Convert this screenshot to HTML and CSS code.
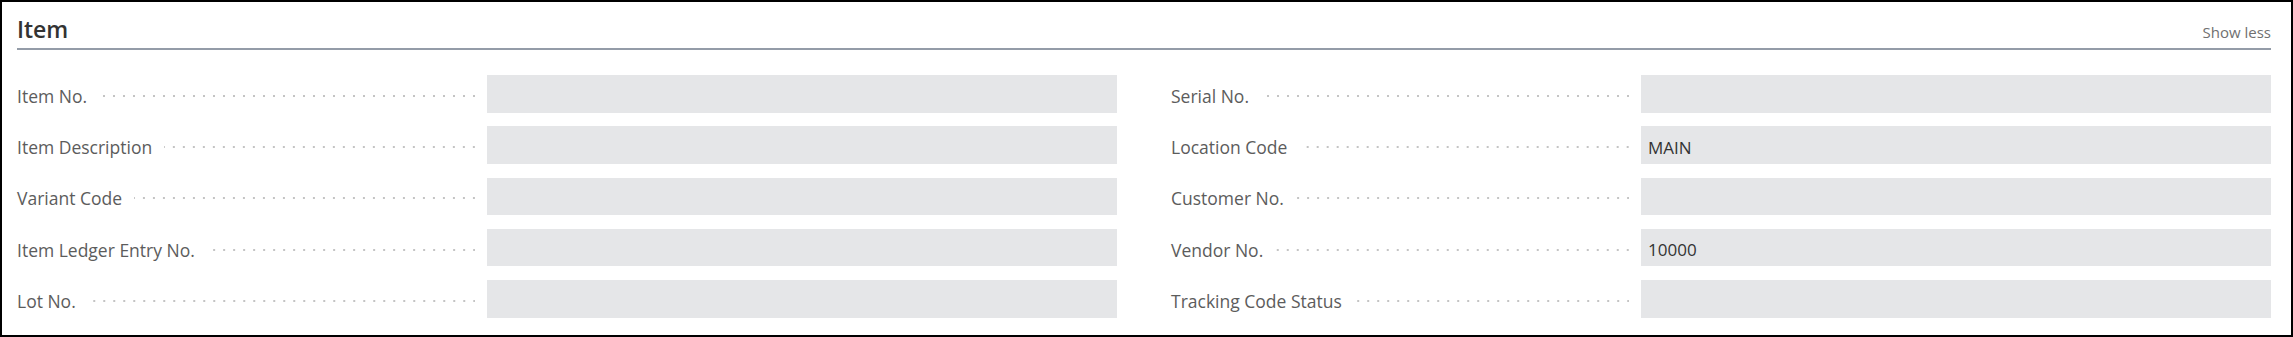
FILE: index.html
```html
<!DOCTYPE html>
<html lang="en">
<head>
<meta charset="UTF-8">
<title>Item</title>
<link rel="stylesheet" href="styles.css">
</head>
<body>

<!-- Item FastTab -->
<div class="card">
    <div class="card-header">
        <div class="card-title">Item</div>
        <a class="show-less" href="#">Show less</a>
    </div>

    <div class="columns">
        <div class="column">
            <div class="field">
                <div class="label"><span>Item No.</span><span class="leader"></span></div>
                <div class="value"></div>
            </div>
            <div class="field">
                <div class="label"><span>Item Description</span><span class="leader"></span></div>
                <div class="value"></div>
            </div>
            <div class="field">
                <div class="label"><span>Variant Code</span><span class="leader"></span></div>
                <div class="value"></div>
            </div>
            <div class="field">
                <div class="label"><span>Item Ledger Entry No.</span><span class="leader"></span></div>
                <div class="value"></div>
            </div>
            <div class="field">
                <div class="label"><span>Lot No.</span><span class="leader"></span></div>
                <div class="value"></div>
            </div>
        </div>

        <div class="column">
            <div class="field">
                <div class="label"><span>Serial No.</span><span class="leader"></span></div>
                <div class="value"></div>
            </div>
            <div class="field">
                <div class="label"><span>Location Code</span><span class="leader"></span></div>
                <div class="value">MAIN</div>
            </div>
            <div class="field">
                <div class="label"><span>Customer No.</span><span class="leader"></span></div>
                <div class="value"></div>
            </div>
            <div class="field">
                <div class="label"><span>Vendor No.</span><span class="leader"></span></div>
                <div class="value">10000</div>
            </div>
            <div class="field">
                <div class="label"><span>Tracking Code Status</span><span class="leader"></span></div>
                <div class="value"></div>
            </div>
        </div>
    </div>
</div>

</body>
</html>
```

FILE: styles.css
```css
* {
    box-sizing: border-box;
}

body, html {
    margin: 0;
    background-color: white;
    font-family: "Segoe UI", "Open Sans", sans-serif;
}

.card {
    height: 337px;
    border: 2px solid #000;
    padding: 0 20px 0 15px;
    background-color: white;
}

/* 헤더 */
.card-header {
    display: flex;
    justify-content: space-between;
    align-items: baseline;
    padding: 12px 0 4px;
    border-bottom: 2px solid #949ca8;
}

.card-title {
    font-size: 23px;
    line-height: 30px;
    font-weight: 600;
    color: #333;
}

.show-less {
    font-size: 15px;
    color: #707070;
    text-decoration: none;
}

.columns {
    display: grid;
    grid-template-columns: 1fr 1fr;
    column-gap: 54px;
    margin-top: 25px;
}

.column {
    display: flex;
    flex-direction: column;
    gap: 13.75px;
}

.field {
    display: grid;
    grid-template-columns: 1fr 630px;
    column-gap: 12px;
    height: 37.5px;
    align-items: center;
}

.label {
    display: flex;
    align-items: center;
    padding-top: 4px;
    font-size: 17.5px;
    line-height: 24px;
    color: #5c5c5c;
    white-space: nowrap;
}

.leader {
    flex: 1;
    height: 4px;
    margin-left: 12px;
    background-image: radial-gradient(circle, #c4c4c4 1px, transparent 1.4px);
    background-size: 10px 4px;
    background-position: calc(100% + 4px) center;
    background-repeat: repeat-x;
}

.value {
    height: 100%;
    display: flex;
    align-items: center;
    padding: 4px 7px 0;
    background-color: #e5e6e8;
    font-size: 17px;
    color: #333;
}
```
